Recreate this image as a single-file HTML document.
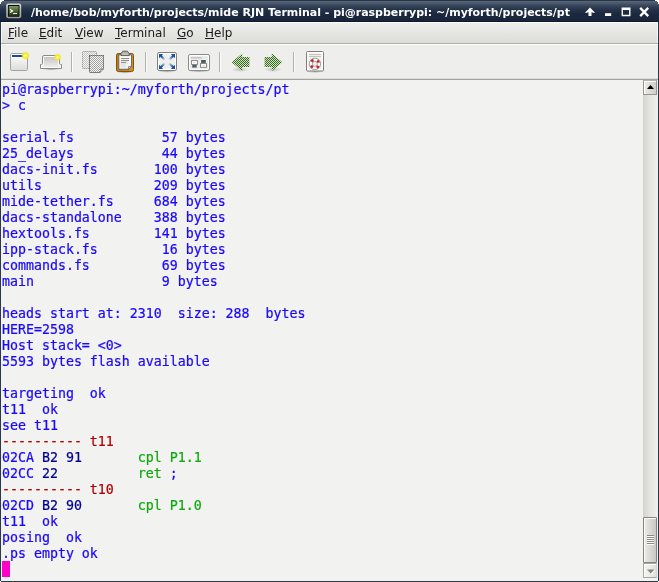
<!DOCTYPE html>
<html>
<head>
<meta charset="utf-8">
<title>Terminal</title>
<style>
html,body{margin:0;padding:0;}
body{width:659px;height:582px;overflow:hidden;background:#fff;position:relative;font-family:"DejaVu Sans","Liberation Sans",sans-serif;}
#win{position:absolute;left:0;top:0;width:659px;height:582px;background:#2a384a;overflow:hidden;}
#title{position:absolute;left:0;top:0;width:659px;height:22px;background:linear-gradient(#2c3848 0,#2c3848 1px,#58667a 1px,#4c5a6e 3px,#36445a 6px,#243248 10px,#1b2940 14px,#182439 21px,#0d1a2e 21px,#0d1a2e 22px);}
#title .txt{letter-spacing:-0.018px;will-change:transform;position:absolute;left:31px;top:5px;height:16px;line-height:16px;font-size:11px;font-weight:bold;color:#fff;white-space:pre;}
#title svg{position:absolute;}
#menubar{position:absolute;left:1px;top:22px;width:657px;height:21px;background:linear-gradient(#efefed,#dcdcd9);border-bottom:1px solid #aeaea6;box-shadow:inset 0 1px 0 #fcfcfb,inset -1px 0 0 #f6f6f4,inset 1px 0 0 #f6f6f4;}
#menubar span{will-change:transform;position:absolute;top:3px;font-size:12px;line-height:16px;color:#1a1a1a;white-space:pre;}
#menubar u{text-decoration:underline;text-underline-offset:1px;}
#toolbar{position:absolute;left:1px;top:44px;width:657px;height:34px;background:#eeeeec;border-top:1px solid #fdfdfc;box-sizing:border-box;border-left:1px solid #f8f8f7;}
#tsep{position:absolute;left:1px;top:78px;width:657px;height:2px;background:linear-gradient(#dcdcd8 0,#dcdcd8 50%,#a4a49c 50%);}
#term{position:absolute;left:1px;top:80px;width:657px;height:501px;background:#f2f2f0;}
#term pre{-webkit-text-stroke:0.22px;will-change:transform;margin:0;position:absolute;left:1px;top:2px;font-family:"DejaVu Sans Mono","Liberation Mono",monospace;font-size:13.288px;line-height:16px;color:#1a08ff;white-space:pre;}
.r{color:#b00000}.g{color:#10a810}.d{color:#000090}
#cursor{position:absolute;left:1px;top:481px;width:8px;height:16px;background:#ff00cc;}
#sb{position:absolute;left:643px;top:80px;width:15px;height:498px;background:linear-gradient(90deg,#d2d2ce,#e2e2df 40%,#f0f0ee);}
#sbup{position:absolute;left:0;top:0;width:14px;height:15px;box-sizing:border-box;border:1px solid #96968f;border-top-color:#b4b4ae;background:linear-gradient(90deg,#ecece9,#dcdbd8 50%,#cfcecb);box-shadow:inset 1px 1px 0 #fdfdfc;}
#sbdn{position:absolute;left:0;top:483px;width:14px;height:15px;box-sizing:border-box;border:1px solid #a6a6a0;border-right-color:#d2d2ce;background:linear-gradient(90deg,#f6f6f4,#dededa);box-shadow:inset 1px 1px 0 #fff;}
#sbth{position:absolute;left:0;top:437px;width:14px;height:46px;box-sizing:border-box;border:1px solid #86867e;border-radius:1px;background:linear-gradient(90deg,#ecece9,#dad9d6 50%,#c9c8c4);box-shadow:inset 1px 1px 0 #fafaf9;}
</style>
</head>
<body>
<div id="win">
 <div id="title">
  <div class="txt">/home/bob/myforth/projects/mide RJN Terminal - pi@raspberrypi: ~/myforth/projects/pt</div>
 </div>
 <div id="menubar">
  <span style="left:7px"><u>F</u>ile</span>
  <span style="left:38px"><u>E</u>dit</span>
  <span style="left:74px"><u>V</u>iew</span>
  <span style="left:114px"><u>T</u>erminal</span>
  <span style="left:176px"><u>G</u>o</span>
  <span style="left:204px"><u>H</u>elp</span>
 </div>
 <div id="toolbar"></div>
 <div id="tsep"></div>
 <div id="term"><pre>pi@raspberrypi:~/myforth/projects/pt
&gt; c

serial.fs           57 bytes
25_delays           44 bytes
dacs-init.fs       100 bytes
utils              209 bytes
mide-tether.fs     684 bytes
dacs-standalone    388 bytes
hextools.fs        141 bytes
ipp-stack.fs        16 bytes
commands.fs         69 bytes
main                9 bytes

heads start at: 2310  size: 288  bytes
HERE=2598
Host stack= &lt;0&gt;
5593 bytes flash available

targeting  ok
t11  ok
see t11
<span class="r">---------- t11</span>
02CA <span class="d">B2 91</span>       <span class="g">cpl P1.1</span>
02CC <span class="d">22</span>          <span class="g">ret</span> ;
<span class="r">---------- t10</span>
02CD <span class="d">B2 90</span>       <span class="g">cpl P1.0</span>
t11  ok
posing  ok
.ps empty ok
</pre><div id="cursor"></div></div>
 <div id="sb"><div id="sbup"></div><div id="sbth"></div><div id="sbdn"></div></div>

<svg id="ov" width="659" height="582" viewBox="0 0 659 582" style="position:absolute;left:0;top:0;pointer-events:none">
 <defs>
  <pattern id="stipL" width="2" height="2" patternUnits="userSpaceOnUse"><rect width="2" height="2" fill="#f4f4f2"/><rect width="1" height="1" fill="#c2c2c0"/><rect x="1" y="1" width="1" height="1" fill="#c2c2c0"/></pattern>
  <pattern id="stipD" width="2" height="2" patternUnits="userSpaceOnUse"><rect width="2" height="2" fill="#f8f8f6"/><rect width="1" height="1" fill="#a0a09e"/><rect x="1" y="1" width="1" height="1" fill="#a0a09e"/></pattern>
  <pattern id="stipG" width="2" height="2" patternUnits="userSpaceOnUse"><rect width="2" height="2" fill="#d4e2c8"/><rect width="1" height="1" fill="#34681a"/><rect x="1" y="1" width="1" height="1" fill="#34681a"/></pattern>
  <radialGradient id="glow"><stop offset="0" stop-color="#ffffe8"/><stop offset="0.22" stop-color="#fbf56a"/><stop offset="0.6" stop-color="#f2ea28" stop-opacity="0.95"/><stop offset="0.8" stop-color="#f2ea28" stop-opacity="0.6"/><stop offset="1" stop-color="#f2ea28" stop-opacity="0"/></radialGradient>
  <radialGradient id="shadow"><stop offset="0" stop-color="#000" stop-opacity="0.28"/><stop offset="1" stop-color="#000" stop-opacity="0"/></radialGradient>
  <linearGradient id="winfill" x1="0" y1="0" x2="0" y2="1"><stop offset="0" stop-color="#ffffff"/><stop offset="1" stop-color="#dcdcda"/></linearGradient>
  <linearGradient id="tabfill" x1="0" y1="0" x2="0" y2="1"><stop offset="0" stop-color="#c4c4c2"/><stop offset="1" stop-color="#ededeb"/></linearGradient>
  <linearGradient id="termfill" x1="0" y1="0" x2="0" y2="1"><stop offset="0" stop-color="#7c9a62"/><stop offset="0.5" stop-color="#4a6238"/><stop offset="1" stop-color="#26341c"/></linearGradient>
  <linearGradient id="board" x1="0" y1="0" x2="1" y2="0"><stop offset="0" stop-color="#c07a10"/><stop offset="1" stop-color="#d0902a"/></linearGradient><linearGradient id="paper" x1="0" y1="0" x2="0" y2="1"><stop offset="0" stop-color="#ffffff"/><stop offset="1" stop-color="#f0f0ee"/></linearGradient><linearGradient id="icoborder" x1="0" y1="0" x2="0" y2="1"><stop offset="0" stop-color="#d8d8d0"/><stop offset="1" stop-color="#9c9c94"/></linearGradient><linearGradient id="fa1" gradientUnits="userSpaceOnUse" x1="160.5" y1="55.5" x2="165" y2="60"><stop offset="0" stop-color="#1d4f9f"/><stop offset="0.3" stop-color="#1d4f9f" stop-opacity="0.9"/><stop offset="1" stop-color="#1d4f9f" stop-opacity="0"/></linearGradient><linearGradient id="fa2" gradientUnits="userSpaceOnUse" x1="173.5" y1="55.5" x2="169" y2="60"><stop offset="0" stop-color="#1d4f9f"/><stop offset="0.3" stop-color="#1d4f9f" stop-opacity="0.9"/><stop offset="1" stop-color="#1d4f9f" stop-opacity="0"/></linearGradient><linearGradient id="fa3" gradientUnits="userSpaceOnUse" x1="160.5" y1="67.5" x2="165" y2="63"><stop offset="0" stop-color="#1d4f9f"/><stop offset="0.3" stop-color="#1d4f9f" stop-opacity="0.9"/><stop offset="1" stop-color="#1d4f9f" stop-opacity="0"/></linearGradient><linearGradient id="fa4" gradientUnits="userSpaceOnUse" x1="173.5" y1="67.5" x2="169" y2="63"><stop offset="0" stop-color="#1d4f9f"/><stop offset="0.3" stop-color="#1d4f9f" stop-opacity="0.9"/><stop offset="1" stop-color="#1d4f9f" stop-opacity="0"/></linearGradient><linearGradient id="teal" x1="0" y1="0" x2="0" y2="1"><stop offset="0" stop-color="#36464c"/><stop offset="1" stop-color="#5c737b"/></linearGradient><radialGradient id="fsfill"><stop offset="0" stop-color="#d8d8d6"/><stop offset="1" stop-color="#ffffff"/></radialGradient>
 </defs>

 <!-- window corners -->
 <g fill="#fff">
  <rect x="0" y="0" width="4" height="1"/><rect x="0" y="1" width="2" height="1"/><rect x="0" y="2" width="1" height="2"/>
  <rect x="655" y="0" width="4" height="1"/><rect x="657" y="1" width="2" height="1"/><rect x="658" y="2" width="1" height="2"/><rect x="0" y="581" width="1" height="1"/><rect x="658" y="581" width="1" height="1"/>
 </g>
 <!-- title icon -->
 <rect x="6.2" y="3.6" width="15" height="14.6" rx="2" fill="url(#icoborder)"/>
 <rect x="7.9" y="5.1" width="11.6" height="11.6" rx="0.6" fill="#070807"/>
 <rect x="8.8" y="6" width="9.8" height="9.8" fill="url(#termfill)"/>
 <path d="M10 9.2 L12.6 10.9 L10 12.6" fill="none" stroke="#fff" stroke-width="1.2"/>
 <rect x="12.9" y="13.1" width="4.1" height="0.9" fill="#fff"/>

 <!-- window buttons -->
 <path d="M590 7.6 L594.8 12.4 L594.2 13 L591.5 12.2 L591.5 16 L588.5 16 L588.5 12.2 L585.8 13 L585.2 12.4 Z" fill="#fff"/>
 <rect x="605" y="13.2" width="6.2" height="2.8" fill="#fff"/>
 <path d="M621.6 7.6 h8.9 v8.6 h-8.9 Z M623 10 v4.8 h6.1 v-4.8 Z" fill="#fff" fill-rule="evenodd"/>
 <path d="M640.2 7.9 L648.2 16.1 M648.2 7.9 L640.2 16.1" stroke="#fff" stroke-width="2.3" fill="none"/>

 <!-- scrollbar glyphs -->
 <path d="M647 89 L654 89 L650.5 85 Z" fill="#000"/>
 <path d="M648 570.5 L655.4 570.5 L651.7 574.6 Z" fill="#fdfdfc"/>
 <path d="M647 569.5 L654.4 569.5 L650.7 573.6 Z" fill="#858580"/>
 <g fill="#8a8a84"><rect x="647" y="535" width="7" height="1"/><rect x="647" y="537" width="7" height="1"/><rect x="647" y="539" width="7" height="1"/><rect x="647" y="541" width="7" height="1"/><rect x="647" y="543" width="7" height="1"/></g>
 <g fill="#fbfbfa"><rect x="647" y="536" width="7" height="1"/><rect x="647" y="538" width="7" height="1"/><rect x="647" y="540" width="7" height="1"/><rect x="647" y="542" width="7" height="1"/><rect x="647" y="544" width="7" height="1"/></g>
 <!-- toolbar separators -->
 <g fill="#b2b2aa">
  <rect x="71" y="52" width="1" height="20"/>
  <rect x="145" y="52" width="1" height="20"/>
  <rect x="219" y="52" width="1" height="20"/>
  <rect x="293" y="52" width="1" height="20"/>
 </g>
 <g fill="#fbfbfa">
  <rect x="72" y="52" width="1" height="20"/>
  <rect x="146" y="52" width="1" height="20"/>
  <rect x="220" y="52" width="1" height="20"/>
  <rect x="294" y="52" width="1" height="20"/>
 </g>

 <!-- icon 1: new window -->
 <rect x="10.5" y="53.5" width="17" height="17" rx="1.2" fill="url(#winfill)" stroke="#a4a4a0"/>
 <rect x="12" y="55" width="11.5" height="2" fill="#1c4a94"/>
 <circle cx="25.5" cy="55.6" r="4.4" fill="url(#glow)"/>

 <!-- icon 2: new tab -->
 <ellipse cx="51" cy="69.3" rx="8" ry="1.3" fill="url(#shadow)"/>
 <path d="M44 55.5 Q42.5 55.5 42.5 57 L42.5 63.3 Q42.5 64.5 41.5 64.5 L40.5 64.5 L40.5 68.5 L61.5 68.5 L61.5 64.5 L60.5 64.5 Q59.5 64.5 59.5 63.3 L59.5 57 Q59.5 55.5 58 55.5 Z" fill="#fafaf9" stroke="#8a8a84"/>
 <path d="M44.5 57 L57.5 57 Q58 57 58 57.5 L58 65.5 L59.5 66 L60 67 L42 67 L42.5 66 L44 65.5 L44 57.5 Q44 57 44.5 57 Z" fill="url(#tabfill)"/>
 <circle cx="57.6" cy="57.2" r="3.9" fill="url(#glow)"/>
 <!-- icon 3: copy (disabled) -->
 <rect x="82" y="51" width="15" height="18" rx="1" fill="url(#stipL)"/>
 <rect x="82.5" y="51.5" width="14" height="17" rx="1" fill="none" stroke="#8e8e8c" stroke-dasharray="1 1"/>
 <path d="M89 55 H104 V69 L100 73 H90 Q89 73 89 72 Z" fill="url(#stipD)"/>
 <path d="M89.5 55.5 H103.5 V68.8 L99.8 72.5 H90.5 Q89.5 72.5 89.5 71.5 Z" fill="none" stroke="#383838" stroke-width="1" stroke-dasharray="1 1"/>
 <path d="M100 72 L100 69 L103 69" fill="none" stroke="#6a6a68" stroke-width="1" stroke-dasharray="1 1"/>
 <!-- icon 4: paste -->
 <ellipse cx="125" cy="72.3" rx="8" ry="1.4" fill="url(#shadow)"/>
 <rect x="116.5" y="53.5" width="17" height="18" rx="1.8" fill="url(#board)" stroke="#84500a"/>
 <path d="M118.8 54.8 H131.5 V66.3 L128.3 69.3 H118.8 Z" fill="url(#paper)" stroke="#5c6062" stroke-width="0.9"/>
 <path d="M128.3 69.3 L128.6 66.6 L131.5 66.3 Z" fill="#f4f4f2" stroke="#5c6062" stroke-width="0.7"/>
 <path d="M120.5 59.5 H128 V64 H126 V67.5 H120.5 Z" fill="#e2e2de" opacity="0.8"/>
 <g fill="#8e8e8c"><rect x="121" y="58" width="8" height="1"/><rect x="121" y="60" width="8" height="1"/><rect x="121" y="62" width="5" height="1"/></g>
 <path d="M121 55.6 L121 53.6 L122.8 51.2 L127.4 51.2 L129.2 53.6 L129.2 55.6 Z" fill="#b2b2a6" stroke="#505254" stroke-width="0.9" stroke-linejoin="round"/>
 <rect x="121.8" y="53.6" width="6.6" height="1" fill="#d0d0c6"/>
 <!-- icon 5: fullscreen -->
 <ellipse cx="167" cy="71.3" rx="9" ry="1.5" fill="url(#shadow)"/>
 <rect x="157.5" y="52.5" width="19" height="18" rx="1.6" fill="#fdfdfc" stroke="#80807a"/>
 <rect x="159.3" y="54.3" width="15.5" height="14.4" fill="#eeeeec"/>
 <g stroke-width="2.2" fill="none">
  <path d="M160.5 55.5 L165 60" stroke="url(#fa1)"/>
  <path d="M173.5 55.5 L169 60" stroke="url(#fa2)"/>
  <path d="M160.5 67.5 L165 63" stroke="url(#fa3)"/>
  <path d="M173.5 67.5 L169 63" stroke="url(#fa4)"/>
 </g>
 <g fill="#1d4f9f">
  <path d="M159 54 h4.2 l-4.2 4.2 Z"/>
  <path d="M175 54 v4.2 l-4.2 -4.2 Z"/>
  <path d="M159 69 v-4.2 l4.2 4.2 Z"/>
  <path d="M175 69 h-4.2 l4.2 -4.2 Z"/>
 </g>
 <!-- icon 6: tabs/windows -->
 <ellipse cx="199" cy="71.2" rx="10" ry="1.4" fill="url(#shadow)"/>
 <rect x="188.5" y="54.5" width="21" height="16" rx="1.6" fill="#fefefd" stroke="#8a8a86"/>
 <rect x="190" y="56" width="18" height="13" fill="#ececea"/>
 <rect x="191" y="57" width="11" height="1.6" fill="#c6c6c4"/>
 <rect x="192.2" y="64.5" width="4.5" height="3.1" fill="#4c636b"/>
 <rect x="191.6" y="60.6" width="5.8" height="3.8" fill="#fff" stroke="#7c7c7a" stroke-width="0.9"/>
 <rect x="193.3" y="62.2" width="2.4" height="0.5" fill="#c8c8c6"/>
 <rect x="201.1" y="60.1" width="4.7" height="3.2" fill="url(#teal)"/>
 <rect x="200.5" y="63.6" width="6" height="3.7" fill="#fff" stroke="#7c7c7a" stroke-width="0.9"/>
 <rect x="202.3" y="65.2" width="2.4" height="0.5" fill="#c8c8c6"/>
 <!-- icon 7/8: arrows (disabled) -->
 <ellipse cx="240" cy="69.5" rx="9" ry="2.6" fill="url(#shadow)" opacity="0.7"/>
 <ellipse cx="273" cy="69.5" rx="9" ry="2.6" fill="url(#shadow)" opacity="0.7"/>
 <path d="M231.6 62.2 L242.2 53.4 L242.2 57 L249.4 57 L249.4 67 L242.2 67 L242.2 71 Z" fill="url(#stipG)"/>
 <path d="M282.4 62.2 L271.8 53.4 L271.8 57 L264.6 57 L264.6 67 L271.8 67 L271.8 71 Z" fill="url(#stipG)"/>

 <!-- icon 9: help -->
 <ellipse cx="315" cy="71.6" rx="9" ry="1.4" fill="url(#shadow)"/>
 <rect x="306.5" y="51.5" width="17" height="19.5" rx="1" fill="#fdfdfc" stroke="#7e7e7a"/>
 <rect x="308.5" y="53.5" width="13" height="15.5" fill="#eeeeec"/>
 <rect x="309" y="54" width="12" height="1" fill="#c2c6ba"/>
 <rect x="309" y="56" width="12" height="1" fill="#c2c6ba"/>
 <circle cx="314.9" cy="63.9" r="4.1" fill="none" stroke="#fbfbfb" stroke-width="3"/>
 <circle cx="314.9" cy="63.9" r="4.1" fill="none" stroke="#d41c2a" stroke-width="2.7" stroke-dasharray="2.5 3.94" stroke-dashoffset="-1.97"/>
 <circle cx="314.9" cy="63.9" r="5.7" fill="none" stroke="#7c7c78" stroke-width="0.7"/>
 <circle cx="314.9" cy="63.9" r="2.5" fill="none" stroke="#8a8a86" stroke-width="0.7"/>
</svg>
</div>
</body>
</html>
